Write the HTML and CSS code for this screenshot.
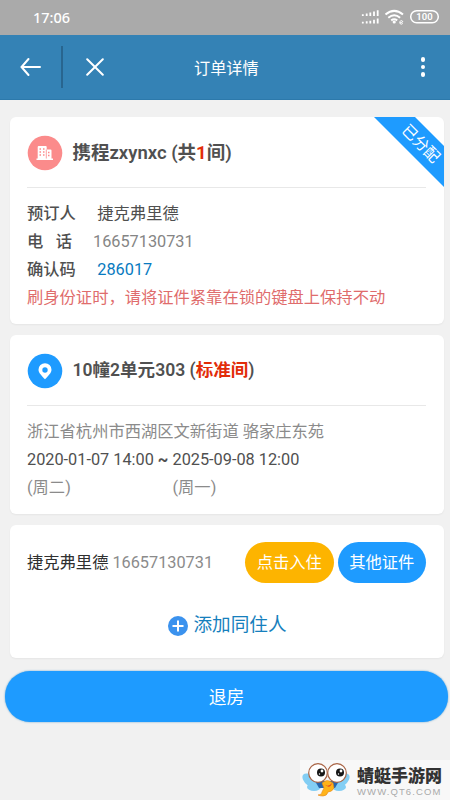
FILE: index.html
```html
<!DOCTYPE html>
<html lang="zh-CN">
<head>
<meta charset="utf-8">
<title>订单详情</title>
<link rel="stylesheet" href="styles.css">
</head>
<body>
<div class="status">
  <span class="time">17:06</span>
  <svg class="status-icons" width="90" height="20" viewBox="0 0 90 20">
    <g stroke="#fff" stroke-width="1.8">
      <path d="M2.8 8V6.3M6.7 8V5.4M10.3 8V4.6M14 8V3.5M17.7 8V2.2"/>
      <path d="M2.8 15.5v-1.7M6.7 15.5v-2.3M10.3 15.5v-2.8M14 15.5v-3.8M17.7 15.5v-5"/>
    </g>
    <g fill="none" stroke="#fff" stroke-width="2">
      <path d="M25.5 6.5Q34.2-.8 43 6.5M28.3 9.7q5.9-4.9 11.8 0"/>
      <path d="M31.2 12.4q3-2.2 6 0"/>
    </g>
    <circle cx="34.2" cy="14" r="1.6" fill="#fff"/>
    <path d="M39.8 15l3-1.2c-.3-2-3.2-1.5-3 .9.2 1.8 2.2 1.8 3 .7" fill="none" stroke="#fff"/>
    <rect x="50.7" y="2.7" width="27.6" height="12" rx="6" fill="none" stroke="#fff" stroke-width="1.5"/>
    <text class="battery" x="64.5" y="12.2" text-anchor="middle">100</text>
  </svg>
</div>
<header class="nav">
  <svg class="nav-back" width="22" height="20" viewBox="0 0 22 20"><path d="M20 10H2M8.5 2L1.5 10l7 8"/></svg>
  <span class="divider"></span>
  <svg class="nav-close" width="18" height="18" viewBox="0 0 18 18"><path d="M1.2 1.2l15.6 15.6M16.8 1.2L1.2 16.8"/></svg>
  <h1 class="nav-title">订单详情</h1>
  <span class="more"><i></i><i></i><i></i></span>
</header>
<main>
  <section class="card order">
    <div class="ribbon-box"><span class="ribbon"><span>已分配</span></span></div>
    <div class="head">
      <svg class="badge" width="36" height="36" viewBox="0 0 36 36">
        <circle cx="18" cy="18" r="17.3" fill="#fb8b8b"/>
        <path d="M9.5 25v-1.500h1.200V12q0-1 1-1h7q1 0 1 1v2.500h3.800q1 0 1 1v8h1.500v1.500z" fill="#fff"/>
        <path d="M12.500 14h1.500M16 14h1.500M12.500 17h1.500M16 17h1.500M12.500 20h1.500M16 20h1.500M21 17.500h1.500M21 20.500h1.500" stroke="#fb8b8b" stroke-width="1.3"/>
        <path d="M19.300 14.500v9" stroke="#fb8b8b" stroke-width=".8"/>
      </svg>
      <h2>携程zxynxc (共<em>1</em>间)</h2>
    </div>
    <div class="row"><b>预订人</b><span class="val">捷克弗里德</span></div>
    <div class="row"><b class="spaced"><span>电</span><span>话</span></b><span class="val phone">16657130731</span></div>
    <div class="row"><b>确认码</b><span class="val code">286017</span></div>
    <p class="row warn">刷身份证时，请将证件紧靠在锁的键盘上保持不动</p>
  </section>
  <section class="card room">
    <div class="head">
      <svg class="badge" width="36" height="36" viewBox="0 0 36 36">
        <circle cx="18" cy="18" r="17.3" fill="#1e9bff"/>
        <path d="M18 26.300c-2.800-3.300-6.500-6.200-6.500-9.600a6.500 6.500 0 0 1 13 0c0 3.400-3.700 6.300-6.500 9.600z" fill="#fff"/>
        <circle cx="18" cy="17" r="2.7" fill="#1e9bff"/>
      </svg>
      <h2>10幢2单元303 (<em>标准间</em>)</h2>
    </div>
    <p class="row muted">浙江省杭州市西湖区文新街道 骆家庄东苑</p>
    <div class="dates">
      <span>2020-01-07 14:00 <b>~</b></span><span>2025-09-08 12:00</span>
      <span class="muted">(周二)</span><span class="muted">(周一)</span>
    </div>
  </section>
  <section class="card guests">
    <div class="guest">
      <span class="name">捷克弗里德</span><span class="tel">16657130731</span>
      <button class="pill amber">点击入住</button><button class="pill">其他证件</button>
    </div>
    <a class="add">
      <svg width="20" height="20" viewBox="0 0 20 20"><circle cx="10" cy="10" r="10" fill="#3b92ee"/><path d="M10 4.500v11M4.500 10h11" stroke="#fff" stroke-width="2"/></svg>
      <span>添加同住人</span>
    </a>
  </section>
  <button class="checkout">退房</button>
</main>
<footer class="brand">
  <svg width="48" height="38" viewBox="0 0 48 38">
    <g fill="#83cef4"><ellipse cx="9" cy="20" rx="10" ry="5.5" transform="rotate(38 9 20)"/><ellipse cx="39" cy="20" rx="10" ry="5.5" transform="rotate(-38 39 20)"/><ellipse cx="12" cy="26" rx="7" ry="4"/><ellipse cx="37" cy="26" rx="7" ry="4"/></g>
    <path d="M13 20h24l-4 7H17z" fill="#2866ad"/>
    <path d="M20 22q5-5 11 0l1 5q-2 4-6 4-1 4-5 4-3 0-5-1 4 0 4-3l2-4z" fill="#ffb319" stroke="#e48717" stroke-width=".6"/>
    <path d="M22 23q4 4 8-1-2 7-8 1" fill="#e84c20"/>
    <g fill="#fff" stroke="#a96445" stroke-width="1.2"><circle cx="16" cy="12" r="9.3"/><circle cx="35" cy="12" r="9.3"/></g>
    <g fill="#171717"><circle cx="19" cy="11.5" r="4"/><circle cx="38" cy="11.5" r="4"/></g>
    <g fill="#fff"><circle cx="20" cy="10" r="1.4"/><circle cx="39" cy="10" r="1.4"/><circle cx="17.5" cy="13" r=".7"/><circle cx="36.5" cy="13" r=".7"/></g>
  </svg>
  <div class="brand-text"><strong>蜻蜓手游网</strong><small>WWW.QT6.COM</small></div>
</footer>
</body>
</html>
```

FILE: styles.css
```css
* { box-sizing: border-box; margin: 0; padding: 0; }
body {
  width: 450px; height: 800px; overflow: hidden;
  display: flex; flex-direction: column;
  background: #f1f1f1; color: #505050;
  font: 16.3px/28px Roboto, "Noto Sans CJK SC", sans-serif;
}
svg { display: block; flex: none; }
button { border: 0; font: inherit; color: #fff; }
.status {
  height: 35px; padding: 0 0 1px 33px; flex: none;
  display: flex; align-items: center;
  background: #aaa; color: #fff;
}
.time { font: 500 14.5px/20px "Noto Sans", sans-serif; }
.status-icons { margin: 1px 0 0 auto; }
.battery { font: 600 9.5px Roboto, sans-serif; fill: #fff; }
.nav {
  height: 65px; flex: none; padding: 0 25px 0 20px;
  display: flex; align-items: center;
  background: #3482b5; border-bottom: 1px solid #2c79ab;
}
.nav path { fill: none; stroke: #fff; stroke-width: 2; stroke-linecap: round; }
.divider { width: 2px; height: 42px; margin: 0 23px 0 19px; background: #28658f; }
.nav-title { margin: 3px 0 0 90px; font-size: 16.2px; font-weight: 400; color: #fff; }
.more { margin-left: auto; display: grid; gap: 3px; }
.more i { width: 4.5px; height: 4.5px; border-radius: 50%; background: #fff; }
main { padding: 17px 2px 0 5px; display: flex; flex-direction: column; }
.card {
  position: relative; margin: 0 4px 11px 5px; padding: 0 18px 0 17px;
  background: #fff; border-radius: 6px; box-shadow: 0 1px 2px #0000000d;
}
.order { height: 207px; }
.room { height: 179px; }
.guests { height: 133px; margin-bottom: 13px; padding-top: 17px; }
.head { height: 71px; display: flex; align-items: center; border-bottom: 1px solid #e8e8e8; margin-bottom: 12px; }
.order .head { padding-top: 2px; }
.room .head { padding-top: 2px; }
.badge { margin-right: 9.5px; }
h2 { font-size: 17.55px; font-weight: 600; line-height: 28px; margin-top: -3px; }
.order h2 { font-size: 18.5px; margin-top: -1px; }
em { font-style: normal; color: #e22c08; }
.order em { font-weight: 700; }
.row { display: flex; white-space: nowrap; }
.row b { width: 48.8px; font-weight: 500; }
.row .spaced { display: flex; justify-content: space-between; width: 45px; }
.val { margin-left: 21.5px; }
.phone { margin-left: 21px; color: #858585; }
.code { color: #087ac0; }
.warn { color: #df6c6c; }
.muted { color: #8b8b8b; }
.dates { display: grid; grid-template-columns: 145.5px auto; white-space: nowrap; }
.ribbon-box { position: absolute; top: 0; right: 0; width: 71px; height: 71px; overflow: hidden; border-radius: 0 6px 0 0; }
.ribbon {
  position: absolute; left: -7px; top: 12px; width: 110px; height: 29px;
  display: flex; justify-content: center; align-items: center;
  transform: rotate(45deg); background: #1e9bff;
  color: #fff; font-size: 15.4px; line-height: 16px;
}
.guest { display: flex; align-items: center; height: 41px; white-space: nowrap; }
.name { color: #303030; }
.tel { margin-left: 4px; color: #8b8b8b; }
.pill { width: 88.5px; height: 41px; border-radius: 21px; background: #1e9bff; }
.amber { margin: 0 4px 0 auto; background: #fdb400; }
.add { display: flex; justify-content: center; align-items: center; gap: 6px; margin: 28px 0 0 1px; color: #167fbd; font-size: 18.6px; }
.add svg { margin-top: 2px; }
.checkout { height: 51px; border-radius: 25px; background: #1e9bff; box-shadow: 0 0 2px #579dcc; font-size: 17.8px; padding-top: 2px; }
.brand { margin-top: auto; align-self: flex-end; width: 150px; height: 40px; display: flex; align-items: center; padding-left: 2px; background: #f8f8f8; }
.brand-text { display: flex; flex-direction: column; margin: 2px 0 0 7px; white-space: nowrap; }
.brand strong { font: 900 17px/20px "Noto Sans CJK SC", sans-serif; color: #333; }
.brand small { font: 9.5px/13px "Liberation Sans", sans-serif; letter-spacing: 1.1px; color: #aaa; }
```
